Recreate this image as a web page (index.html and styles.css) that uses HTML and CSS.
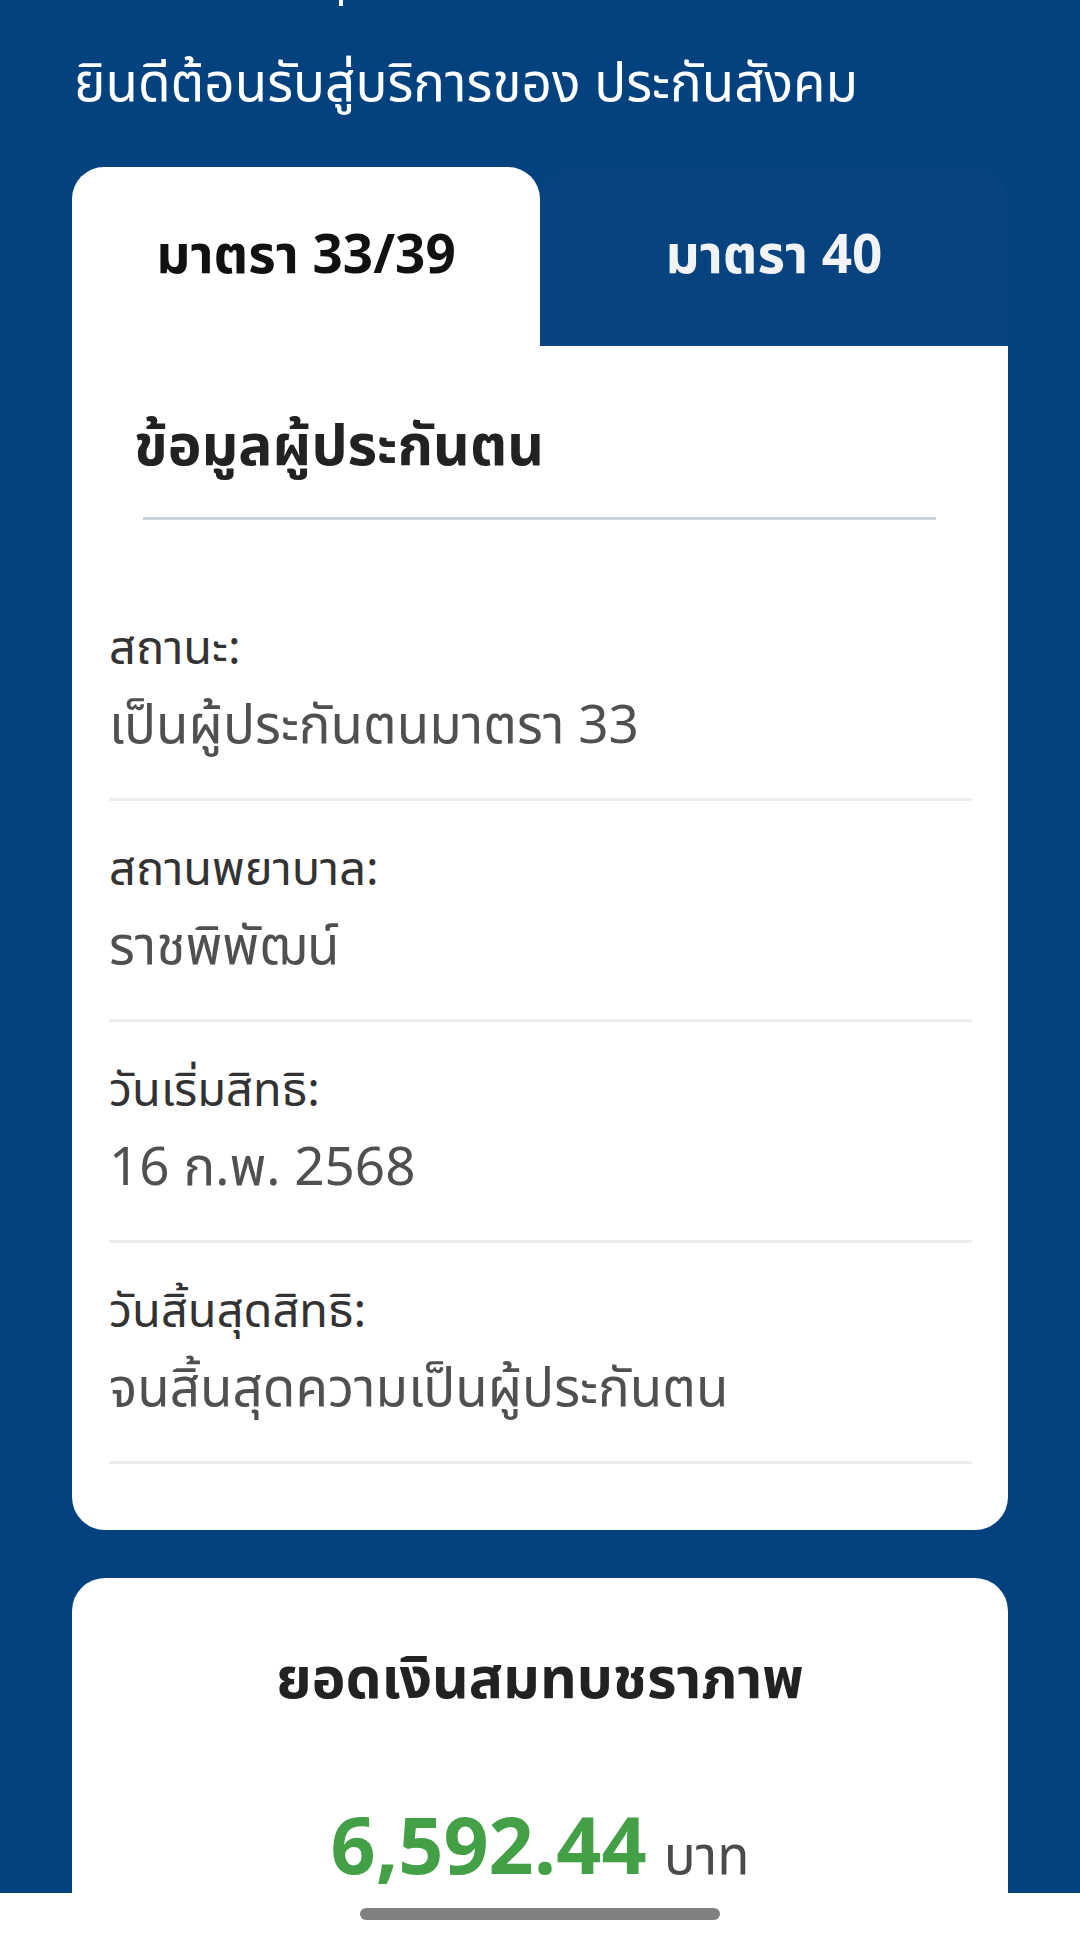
FILE: index.html
```html
<!DOCTYPE html>
<html lang="th">
<head>
  <meta charset="UTF-8">
  <meta name="viewport" content="width=device-width, initial-scale=1.0">
  <title>ประกันสังคม</title>
  <link rel="stylesheet" href="styles.css">
</head>
<body>

  <div class="screen">
    <div class="content">
      <div class="title-tail"></div>
      <p class="welcome">ยินดีต้อนรับสู่บริการของ ประกันสังคม</p>

      <div class="tabs">
        <div class="tab active">มาตรา 33/39</div>
        <div class="tab">มาตรา 40</div>
      </div>

      <div class="card info-card">
        <h2 class="card-title">ข้อมูลผู้ประกันตน</h2>
        <div class="title-line"></div>

        <div class="info-list">
          <div class="info-row">
            <div class="info-label">สถานะ:</div>
            <div class="info-value">เป็นผู้ประกันตนมาตรา 33</div>
          </div>
          <div class="info-row">
            <div class="info-label">สถานพยาบาล:</div>
            <div class="info-value">ราชพิพัฒน์</div>
          </div>
          <div class="info-row">
            <div class="info-label">วันเริ่มสิทธิ:</div>
            <div class="info-value">16 ก.พ. 2568</div>
          </div>
          <div class="info-row">
            <div class="info-label">วันสิ้นสุดสิทธิ:</div>
            <div class="info-value">จนสิ้นสุดความเป็นผู้ประกันตน</div>
          </div>
        </div>
      </div>

      <div class="card saving-card">
        <h2 class="saving-title">ยอดเงินสมทบชราภาพ</h2>
        <div class="saving-amount"><span class="amount">6,592.44</span><span class="unit">บาท</span></div>
      </div>
    </div>

    <div class="nav-bar">
      <div class="home-pill"></div>
    </div>
  </div>

</body>
</html>
```

FILE: styles.css
```css
body {
  margin: 0;
  background: #04427f;
  font-family: "Noto Sans Thai", "Noto Sans", sans-serif;
  color: #222;
}
.screen {
  height: 1941px;
  display: flex;
  flex-direction: column;
  overflow: hidden;
}
.content {
  flex: 1;
  overflow: hidden;
  padding: 0 72px;
}
.title-tail {
  width: 4px;
  height: 6px;
  margin-left: 267px;
  background: #fff;
}
.welcome {
  margin: 46px 0 0 2px;
  font-size: 53px;
  line-height: 66px;
  color: #fff;
}

/* tabs */
.tabs {
  display: flex;
  margin-top: 49px;
  height: 179px;
}
.tab {
  flex: 1;
  display: flex;
  align-items: center;
  justify-content: center;
  font-size: 53px;
  font-weight: 700;
  color: #f2f3f5;
  background: #07437f;
  border-radius: 32px 32px 0 0;
}
.tab.active {
  background: #fff;
  color: #111;
}

/* cards */
.card {
  background: #fff;
}
.info-card {
  border-radius: 0 0 33px 33px;
  padding: 0 36px 66px 37px;
}
.card-title {
  margin: 0;
  padding: 66px 0 0 25px;
  font-size: 57px;
  line-height: 72px;
  font-weight: 700;
  color: #222;
}
.title-line {
  height: 3px;
  background: #c9d0d8;
  margin: 33px 36px 0 34px;
}
.info-list {
  padding-top: 60px;
}
.info-row {
  padding: 38px 0 26px;
  border-bottom: 3px solid #efeeec;
}
.info-label {
  font-size: 47px;
  line-height: 64px;
  color: #333;
}
.info-value {
  font-size: 53px;
  line-height: 90px;
  color: #505050;
}

.saving-card {
  margin-top: 48px;
  border-radius: 33px 33px 0 0;
  text-align: center;
  padding-top: 63px;
  height: 400px;
}
.saving-title {
  margin: 0;
  font-size: 57px;
  line-height: 80px;
  font-weight: 700;
  color: #222;
}
.saving-amount {
  margin-top: 89px;
  font-size: 79px;
  line-height: 80px;
}
.amount {
  font-weight: 700;
  color: #43a047;
}
.unit {
  font-size: 53px;
  color: #4a4a4a;
  margin-left: 17px;
}

/* system bar */
.nav-bar {
  height: 48px;
  background: #fff;
  display: flex;
  justify-content: center;
  padding-top: 15px;
  box-sizing: border-box;
}
.home-pill {
  width: 360px;
  height: 12px;
  border-radius: 6px;
  background: #808080;
}
```
